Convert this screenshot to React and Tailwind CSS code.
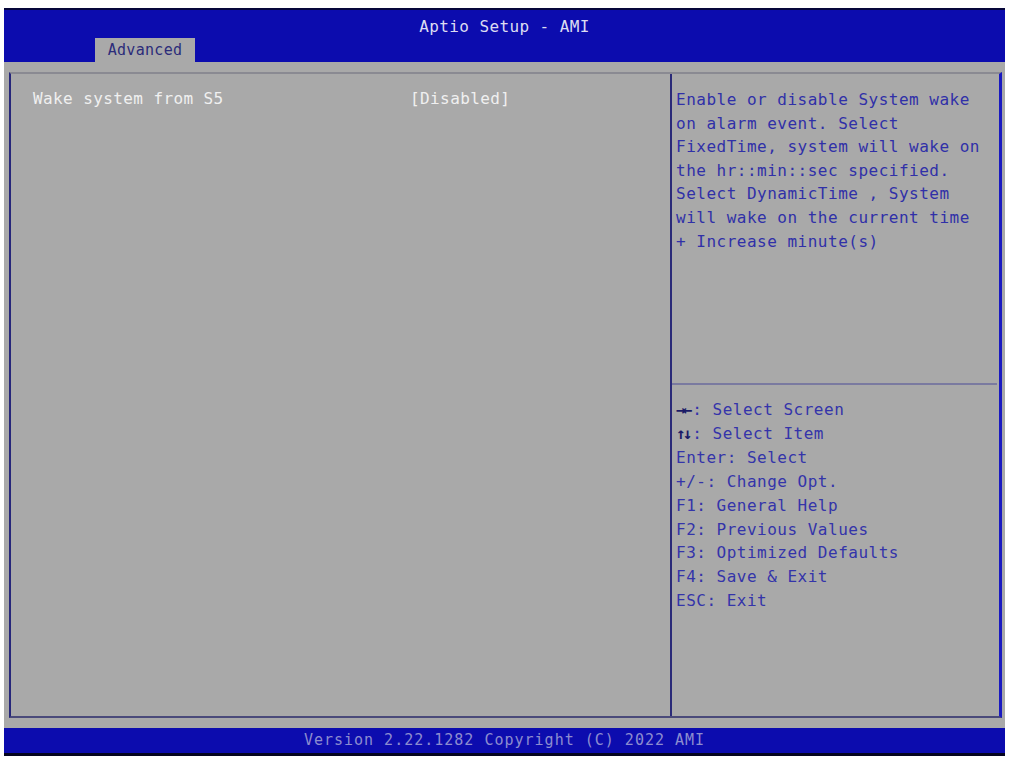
const helpLines = [
  'Enable or disable System wake',
  'on alarm event. Select',
  'FixedTime, system will wake on',
  'the hr::min::sec specified.',
  'Select DynamicTime , System',
  'will wake on the current time',
  '+ Increase minute(s)',
];

const keyLines = [
  ['\u2192\u2190', ': Select Screen'],
  ['\u2191\u2193', ': Select Item'],
  ['', 'Enter: Select'],
  ['', '+/-: Change Opt.'],
  ['', 'F1: General Help'],
  ['', 'F2: Previous Values'],
  ['', 'F3: Optimized Defaults'],
  ['', 'F4: Save & Exit'],
  ['', 'ESC: Exit'],
];

const mono = { fontFamily: '"DejaVu Sans Mono", "Liberation Mono", monospace' };

export default function App() {
  return (
    <div className="w-full h-screen bg-white pt-[8px] pl-[4px] pr-[4px] pb-[6px]" style={mono}>
      <div className="h-full flex flex-col bg-[#a9a9a9]">
        {/* Header */}
        <div className="relative h-[54px] bg-[#0c0cae] border-t-[2px] border-[#06063a] flex items-end">
          <div className="absolute left-0 right-0 top-[5px] text-center text-[#dcdcf2] text-[16px] tracking-[0.4px]">
            Aptio Setup - AMI
          </div>
          <div className="ml-[91px] w-[100px] h-[24px] bg-[#a9a9a9] flex items-center justify-center text-[15px] text-[#2c2c7a] tracking-[0.3px]">
            Advanced
          </div>
        </div>

        {/* Body */}
        <div className="flex-1 flex flex-col pt-[10px] pl-[5px] pr-[3px] pb-[10px]">
          <div className="flex-1 flex border-t-[2px] border-t-[#8a8a92] border-l-[2px] border-l-[#26267a] border-b-[2px] border-b-[#4a4a7a] border-r-[3px] border-r-[#1a1ac0]">
            {/* Left pane */}
            <div className="w-[661px] border-r-[2px] border-[#2a2a78] pt-[13px] pl-[22px]">
              <div className="flex text-[16px] text-[#f0f0f0] leading-[24px] tracking-[0.4px]">
                <span className="w-[377px]">Wake system from S5</span>
                <span>[Disabled]</span>
              </div>
            </div>

            {/* Right pane */}
            <div className="flex-1 flex flex-col">
              <div className="h-[311px] pt-[14px] pl-[4px] border-b-[2px] border-[#7a7aa0] mr-[2px]">
                {helpLines.map((line) => (
                  <div key={line} className="text-[16px] text-[#3030a8] leading-[23.6px] tracking-[0.5px] whitespace-pre">
                    {line}
                  </div>
                ))}
              </div>
              <div className="pt-[13px] pl-[4px]">
                {keyLines.map(([arrows, text]) => (
                  <div key={text} className="text-[16px] text-[#3434aa] leading-[23.9px] tracking-[0.5px] whitespace-pre">
                    {arrows && <span className="text-[#1a1a66] font-bold tracking-[-3px] mr-[3px]">{arrows}</span>}
                    {text}
                  </div>
                ))}
              </div>
            </div>
          </div>
        </div>

        {/* Footer */}
        <div className="h-[28px] bg-[#0c0cae] border-b-[3px] border-[#050520] flex items-center justify-center text-[15px] text-[#8c8cd0] tracking-[1px]">
          Version 2.22.1282 Copyright (C) 2022 AMI
        </div>
      </div>
    </div>
  );
}
